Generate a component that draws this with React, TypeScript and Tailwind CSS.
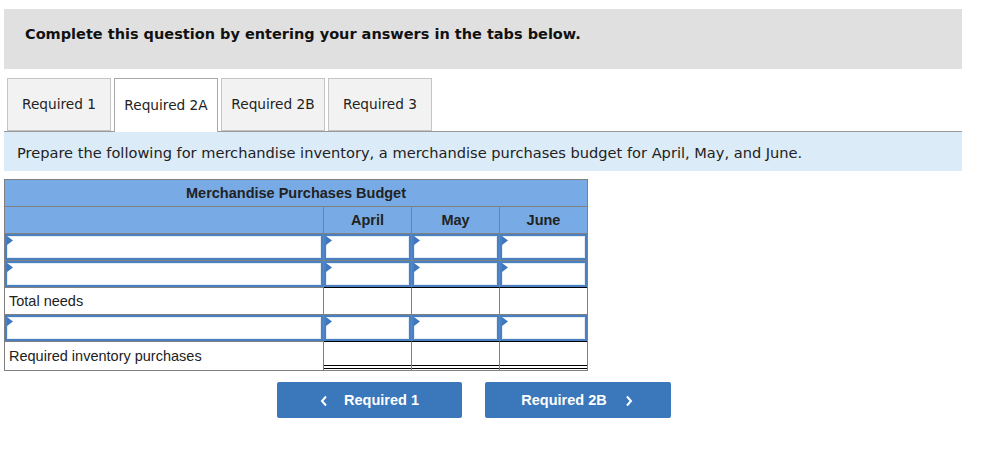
import React from "react";

const Tri = () => (
  <svg className="absolute left-0 top-0" width="6" height="9" viewBox="0 0 6 9">
    <polygon points="0,0 6,4.5 0,9" fill="#3f78c0" />
  </svg>
);

const InputBox = () => (
  <div className="relative h-full w-full border-2 border-[#4a7fc0] bg-white shadow-[inset_0_0_0_1px_#e3edf8]">
    <Tri />
  </div>
);

const InputRow = () => (
  <div className="h-[27px] border-b border-[#808080] flex">
    <div className="w-[319px] border-r border-[#808080]">
      <InputBox />
    </div>
    <div className="w-[88px] border-r border-[#808080]">
      <InputBox />
    </div>
    <div className="w-[88px] border-r border-[#808080]">
      <InputBox />
    </div>
    <div className="w-[87px]">
      <InputBox />
    </div>
  </div>
);

export default function App() {
  const sans = { fontFamily: '"DejaVu Sans", Verdana, sans-serif' };
  const arial = { fontFamily: '"Liberation Sans", Arial, sans-serif' };
  const tabs = ["Required 1", "Required 2A", "Required 2B", "Required 3"];
  return (
    <div className="w-[991px] h-[461px] bg-white pt-[9px] pl-[4px] overflow-hidden">
      <div
        className="w-[958px] h-[60px] bg-[#e0e0e0] pt-[15px] pl-[21px] text-[14.5px] leading-[20px] font-bold text-[#111]"
        style={sans}
      >
        Complete this question by entering your answers in the tabs below.
      </div>
      <div className="mt-[9px] flex pl-[3px] gap-[3px] h-[53px] relative z-10" style={sans}>
        {tabs.map((t, i) => (
          <div
            key={t}
            className={
              i === 1
                ? "w-[104px] h-[54px] bg-white border border-[#a8a8a8] border-b-0 flex items-center justify-center pb-[1px] text-[13.7px] text-[#222]"
                : "w-[104px] h-[53px] bg-[#f2f2f2] border border-[#c4c4c4] flex items-center justify-center text-[13.7px] text-[#222]"
            }
          >
            {t}
          </div>
        ))}
      </div>
      <div
        className="w-[958px] h-[40px] border-t border-[#999] bg-[#dcebf8] flex items-center pl-[13px] pt-[3px] text-[14.6px] text-[#222]"
        style={sans}
      >
        Prepare the following for merchandise inventory, a merchandise purchases budget for April, May, and June.
      </div>
      <div className="mt-[8px] w-[584px] border border-[#808080] text-[14.5px] text-[#222]" style={arial}>
        <div className="h-[27px] bg-[#78abe5] border-b border-[#808080] flex items-center justify-center pt-[2px] font-bold">
          Merchandise Purchases Budget
        </div>
        <div className="h-[27px] bg-[#78abe5] border-b border-[#808080] flex font-bold">
          <div className="w-[319px] border-r border-[#808080]" />
          <div className="w-[88px] border-r border-[#808080] flex items-center justify-center pt-[2px]">April</div>
          <div className="w-[88px] border-r border-[#808080] flex items-center justify-center pt-[2px]">May</div>
          <div className="w-[87px] flex items-center justify-center pt-[2px]">June</div>
        </div>
        <InputRow />
        <InputRow />
        <div className="h-[27px] border-b border-[#808080] flex">
          <div className="w-[319px] border-r border-[#808080] flex items-center pl-[4px] pt-[2px]">Total needs</div>
          <div className="w-[88px] border-r border-[#808080] border-t border-t-black -mt-[1px]" />
          <div className="w-[88px] border-r border-[#808080] border-t border-t-black -mt-[1px]" />
          <div className="w-[87px] border-t border-t-black -mt-[1px]" />
        </div>
        <InputRow />
        <div className="h-[28px] flex">
          <div className="w-[319px] border-r border-[#808080] flex items-center pl-[4px] pt-[2px]">
            Required inventory purchases
          </div>
          <div className="w-[88px] border-r border-[#808080] border-t border-t-black -mt-[1px] flex flex-col justify-end">
            <div className="h-[4px] border-y border-black mb-[1px]" />
          </div>
          <div className="w-[88px] border-r border-[#808080] border-t border-t-black -mt-[1px] flex flex-col justify-end">
            <div className="h-[4px] border-y border-black mb-[1px]" />
          </div>
          <div className="w-[87px] border-t border-t-black -mt-[1px] flex flex-col justify-end">
            <div className="h-[4px] border-y border-black mb-[1px]" />
          </div>
        </div>
      </div>
      <div className="mt-[11px] flex pl-[273px] gap-[23px]" style={arial}>
        <div className="w-[185px] h-[36px] rounded-[2px] bg-[#3b77bb] text-white font-bold text-[14.5px] flex items-center justify-center gap-[16px] pt-[2px]">
          <svg width="8" height="12" viewBox="0 0 8 12">
            <polyline points="6,1.5 2,6 6,10.5" fill="none" stroke="white" strokeWidth="2" />
          </svg>
          <span>Required 1</span>
        </div>
        <div className="w-[186px] h-[36px] rounded-[2px] bg-[#3b77bb] text-white font-bold text-[14.5px] flex items-center justify-center gap-[18px] pt-[2px] pr-[2px]">
          <span>Required 2B</span>
          <svg width="8" height="12" viewBox="0 0 8 12">
            <polyline points="2,1.5 6,6 2,10.5" fill="none" stroke="white" strokeWidth="2" />
          </svg>
        </div>
      </div>
    </div>
  );
}
